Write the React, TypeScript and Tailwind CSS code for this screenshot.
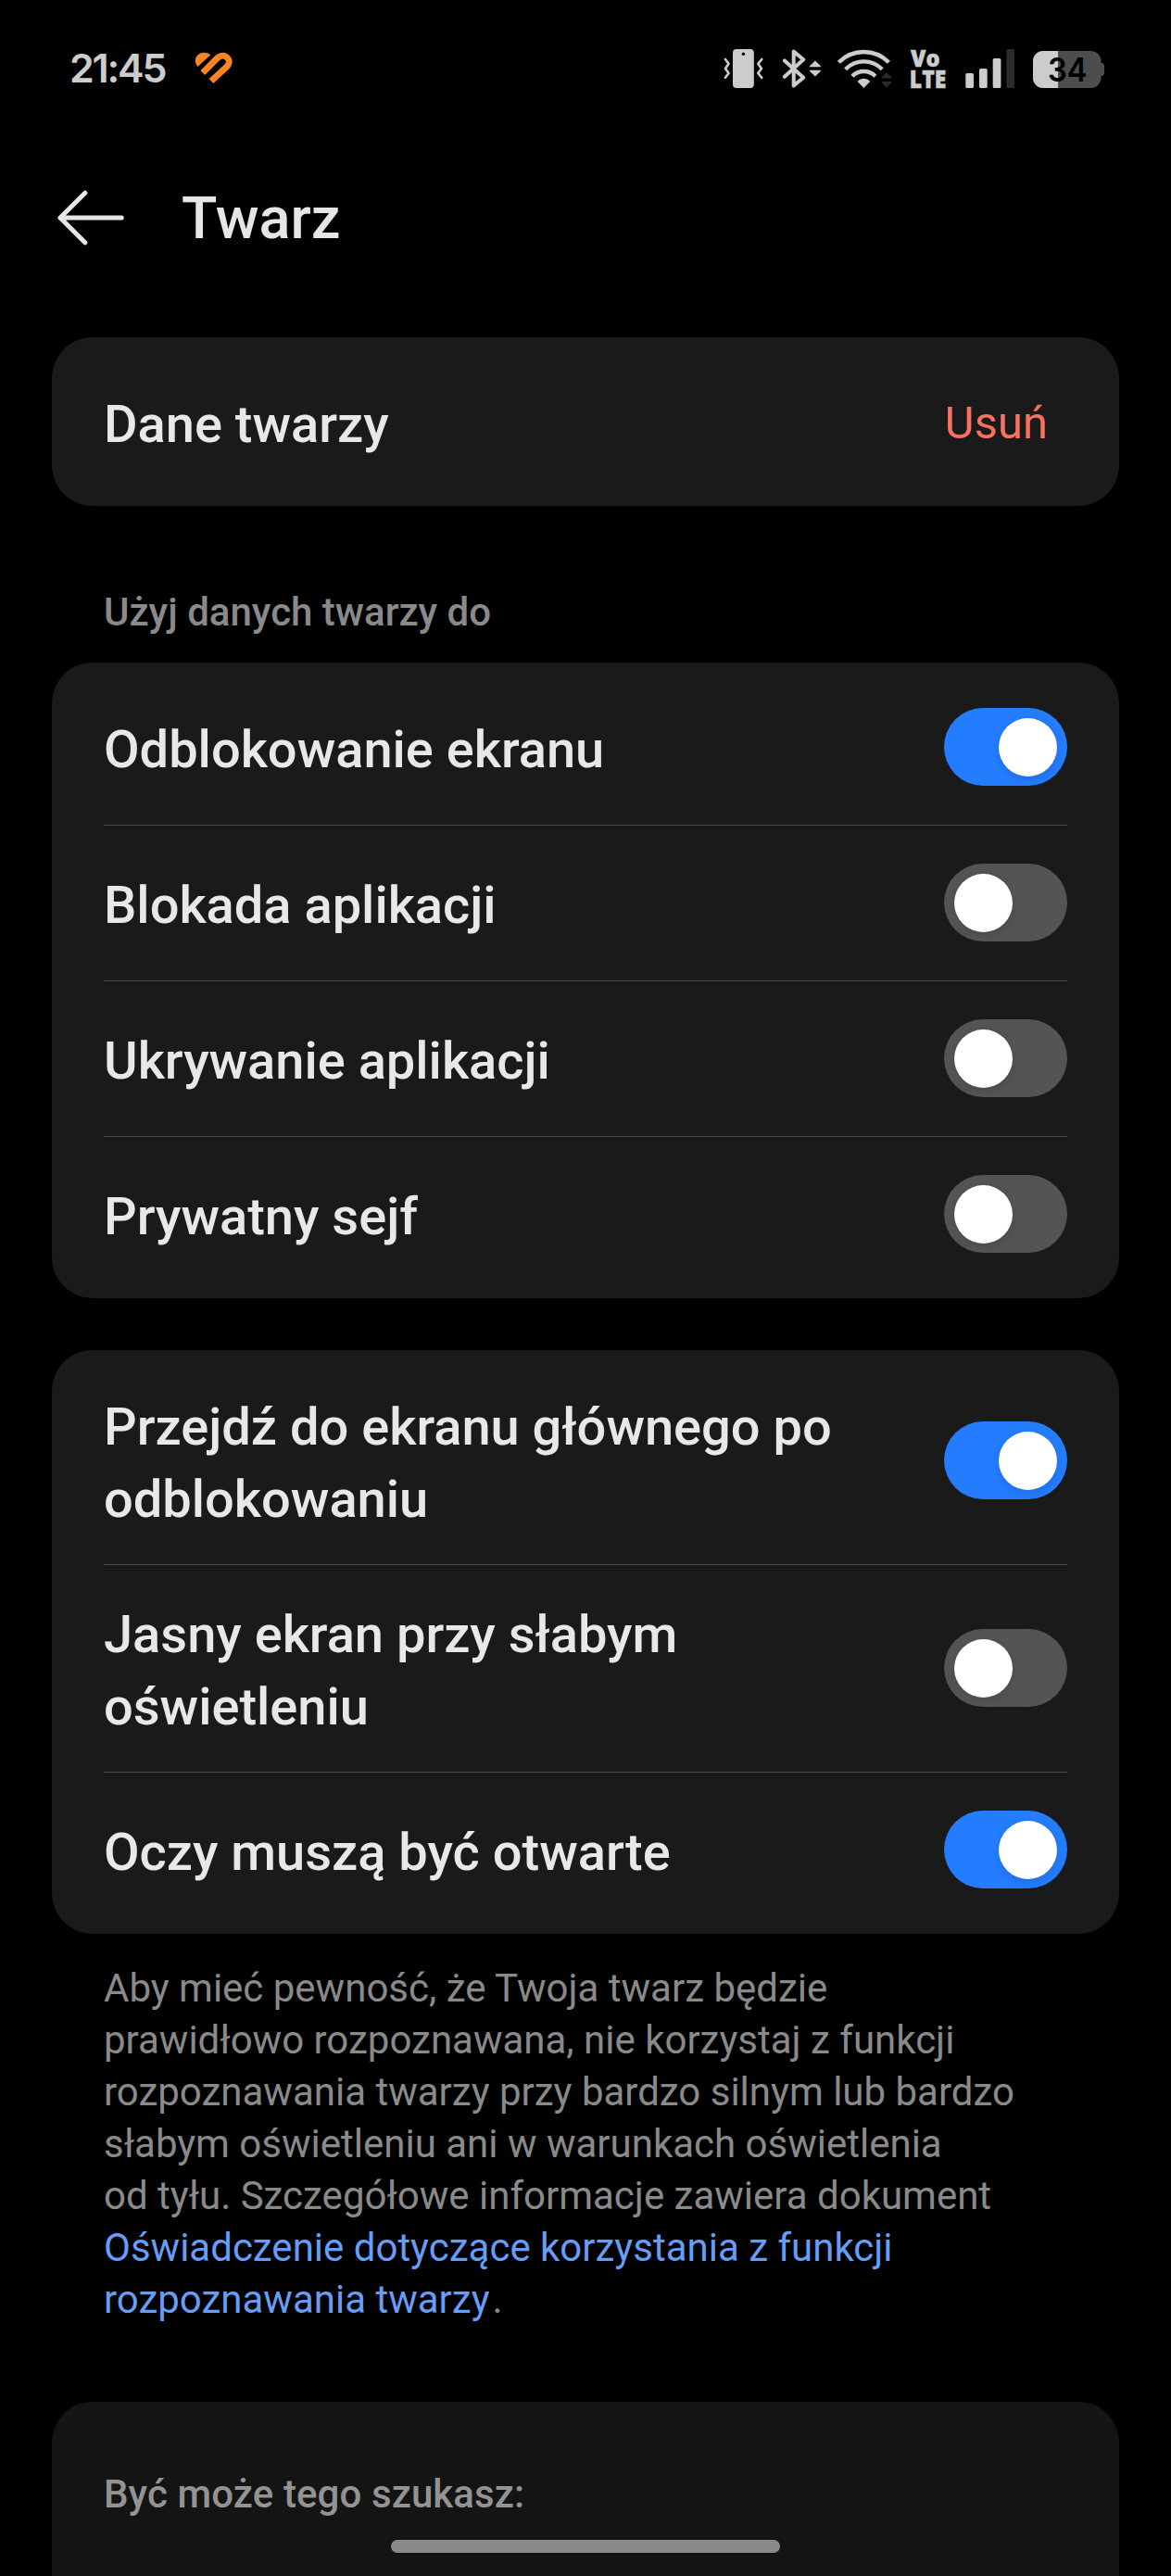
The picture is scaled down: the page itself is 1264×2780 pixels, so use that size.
import { useState } from "react";

type Option = {
    id: string;
    lines: string[];
    enabled: boolean;
};

const usageOptions: Option[] = [
    { id: "unlock", lines: ["Odblokowanie ekranu"], enabled: true },
    { id: "app-lock", lines: ["Blokada aplikacji"], enabled: false },
    { id: "app-hide", lines: ["Ukrywanie aplikacji"], enabled: false },
    { id: "safe", lines: ["Prywatny sejf"], enabled: false },
];

const unlockOptions: Option[] = [
    { id: "home", lines: ["Przejdź do ekranu głównego po", "odblokowaniu"], enabled: true },
    { id: "bright", lines: ["Jasny ekran przy słabym", "oświetleniu"], enabled: false },
    { id: "eyes", lines: ["Oczy muszą być otwarte"], enabled: true },
];

function HeartIcon() {
    return (
        <svg width="42" height="36" viewBox="0 0 42 36" fill="none">
            <path d="M3.4 15.9 C-0.6 11 0.3 5 4.6 2.4 C8.6 0 13.6 0.5 17.3 3.2 Z" fill="#fd8420" />
            <path d="M8.8 22.6 L24.2 7 C27 4.2 31.2 3.1 34.4 5.4 C38.2 8.2 38 12.6 35 15.7 L17.9 31.6" stroke="#fd8420" strokeWidth="6.8" />
        </svg>
    );
}

function VibrateIcon() {
    return (
        <svg width="44" height="42" viewBox="0 0 44 42" fill="none">
            <rect x="10" y="0" width="22.8" height="42" rx="4" fill="#cccccc" />
            <circle cx="21.4" cy="5.2" r="1.7" fill="#000" />
            <g stroke="#cccccc" strokeWidth="2.6" strokeLinecap="round" strokeLinejoin="round">
                <path d="M1.9 11 L5.6 15.8 L2 21 L5.6 26 L1.9 30.8" />
                <path d="M41.3 11 L37.2 15.8 L41 21 L37.2 26 L41.3 30.8" />
            </g>
        </svg>
    );
}

function BluetoothIcon() {
    return (
        <svg width="43" height="42" viewBox="0 0 43 42" fill="none">
            <path d="M2.9 12.4 L23.2 30.8 L12.7 39.4 V2.6 L23.2 11.2 L2.9 29.8" stroke="#cccccc" strokeWidth="4" strokeLinecap="round" strokeLinejoin="round" />
            <path d="M35.9 12.6 L41.9 18.2 V19.2 H29.9 V18.2 Z M35.9 29.4 L41.9 23.8 V22.8 H29.9 V23.8 Z" fill="#cccccc" />
        </svg>
    );
}

function WifiIcon() {
    return (
        <svg width="60" height="42" viewBox="0 0 60 42" fill="none">
            <g stroke="#cccccc" strokeWidth="4.4">
                <path d="M2.4 14.3 A38 38 0 0 1 56.4 14.3" />
                <path d="M9.6 21.8 A27.5 27.5 0 0 1 49.2 21.8" />
                <path d="M16.9 29.2 A17.5 17.5 0 0 1 41.9 29.2" />
            </g>
            <path d="M22.6 35 C26.4 30.6 32.4 30.6 36.2 35 L29.4 42 Z" fill="#cccccc" />
            <path d="M54 25.2 L59.4 30.6 V31.6 H48.6 V30.6 Z M54 41.4 L59.4 36 V35 H48.6 V36 Z" fill="#2b2b2b" />
        </svg>
    );
}

function VolteIcon() {
    return (
        <svg width="37" height="42" viewBox="0 0 37 42" fill="#cccccc" stroke="#cccccc" strokeWidth="0.5" className="overflow-visible font-['Open_Sans',sans-serif] font-extrabold">
            <text x="0" y="18.6" fontSize="25" textLength="31.5" lengthAdjust="spacingAndGlyphs">Vo</text>
            <text x="-1.2" y="42" fontSize="26" textLength="39.5" lengthAdjust="spacingAndGlyphs">LTE</text>
        </svg>
    );
}

function SignalIcon() {
    return (
        <svg width="54" height="42" viewBox="0 0 54 42" fill="#cccccc">
            <rect x="0.3" y="26" width="8.7" height="16" rx="1.6" />
            <rect x="15" y="21" width="8.7" height="21" rx="1.6" />
            <rect x="29.7" y="10" width="8.7" height="32" rx="1.6" />
            <rect x="44.4" y="0" width="8.7" height="42" rx="1.6" fill="#2b2b2b" />
        </svg>
    );
}

function BatteryIcon() {
    return (
        <svg width="77" height="42" viewBox="0 0 77 42" className="overflow-visible">
            <path d="M72 15 H74 Q77 15 77 19 V25 Q77 29 74 29 H72 Z" fill="#4d4d4d" />
            <rect x="0" y="2" width="73.5" height="40" rx="11" fill="#4d4d4d" />
            <path d="M11 2 H27 V42 H11 A11 11 0 0 1 0 31 V13 A11 11 0 0 1 11 2 Z" fill="#cccccc" />
            <text x="16" y="35.4" fontSize="36" textLength="42.5" lengthAdjust="spacingAndGlyphs" className="font-[Inter,sans-serif] font-semibold">34</text>
        </svg>
    );
}

function Toggle({ on, onClick, label }: { on: boolean; onClick: () => void; label: string }) {
    return (
        <button
            type="button"
            role="switch"
            aria-checked={on}
            aria-label={label}
            onClick={onClick}
            className={`flex h-[84px] w-[133px] shrink-0 items-center rounded-full px-[11px] ${on ? "justify-end bg-[#247cff]" : "justify-start bg-[#545454]"}`}
        >
            <span className="size-[63px] rounded-full bg-white shadow-[0_3px_8px_rgba(0,0,0,0.12)]" />
        </button>
    );
}

function OptionCard({ options }: { options: Option[] }) {
    const [state, setState] = useState(options.map((option) => option.enabled));

    const toggle = (index: number) => {
        setState(state.map((value, i) => (i === index ? !value : value)));
    };

    return (
        <div className="rounded-[44px] bg-[#1a1a1a] px-14 py-[7px]">
            {options.map((option, index) => (
                <div
                    key={option.id}
                    className={`relative flex items-center justify-between ${option.lines.length > 1 ? "h-[224px]" : "h-[168px]"}`}
                >
                    <div className="pt-[6px] text-[56px] leading-[78px] font-medium whitespace-nowrap text-[#e8e8e8]">
                        {option.lines.map((line) => (
                            <p key={line}>{line}</p>
                        ))}
                    </div>
                    <Toggle on={state[index]} onClick={() => toggle(index)} label={option.lines.join(" ")} />
                    {index > 0 && <div className="absolute inset-x-0 top-0 h-px bg-[#484848]" />}
                </div>
            ))}
        </div>
    );
}

export default function App() {
    return (
        <div className="relative h-[2780px] w-[1264px] overflow-hidden bg-black font-[Roboto,sans-serif]">
            <div className="flex h-[148px] items-center justify-between pr-[72px] pl-[75px]">
                <div className="flex items-center">
                    <span className="w-[135px] pb-[3px] font-[Inter,sans-serif] text-[43px] leading-[52px] font-semibold tracking-[-2.2px] text-[#cccccc]">21:45</span>
                    <HeartIcon />
                </div>
                <div className="flex items-center">
                    <VibrateIcon />
                    <div className="ml-[19px]"><BluetoothIcon /></div>
                    <div className="ml-4"><WifiIcon /></div>
                    <div className="ml-5"><VolteIcon /></div>
                    <div className="ml-[22px]"><SignalIcon /></div>
                    <div className="ml-[19px]"><BatteryIcon /></div>
                </div>
            </div>

            <header className="flex h-[174px] items-center pl-[60px]">
                <svg width="76" height="62" viewBox="0 0 76 62" fill="none" stroke="#e6e6e6" strokeWidth="5" strokeLinecap="round" strokeLinejoin="round">
                    <path d="M71.2 31 H5 M31.8 4.2 L5 31 L31.8 57.8" />
                </svg>
                <h1 className="ml-[60px] pt-px text-[63px] leading-[74px] font-medium text-[#e6e6e6]">Twarz</h1>
            </header>

            <main className="px-14 pt-[42px]">
                <div className="flex h-[182px] items-center justify-between rounded-[44px] bg-[#1a1a1a] pr-[77px] pl-14">
                    <span className="pt-[6px] text-[56px] leading-[78px] font-medium text-[#e8e8e8]">Dane twarzy</span>
                    <button type="button" className="pt-[4px] text-[49px] leading-[58px] text-[#f87060]">Usuń</button>
                </div>

                <h2 className="mt-[87px] mb-[26px] px-14 text-[42px] leading-[56px] font-medium text-[#8a8a8a]">Użyj danych twarzy do</h2>
                <OptionCard options={usageOptions} />

                <div className="mt-14">
                    <OptionCard options={unlockOptions} />
                </div>

                <p className="mt-[31px] px-14 text-[42px] leading-[56px] whitespace-nowrap text-[#8a8a8a]">
                    Aby mieć pewność, że Twoja twarz będzie<br />
                    prawidłowo rozpoznawana, nie korzystaj z funkcji<br />
                    rozpoznawania twarzy przy bardzo silnym lub bardzo<br />
                    słabym oświetleniu ani w warunkach oświetlenia<br />
                    od tyłu. Szczegółowe informacje zawiera dokument<br />
                    <a href="#" className="mr-[3px] text-[#669df6]">
                        Oświadczenie dotyczące korzystania z funkcji<br />
                        rozpoznawania twarzy
                    </a>.
                </p>

                <div className="mt-[82px] h-[300px] rounded-[44px] bg-[#141414] px-14 pt-[72px]">
                    <h2 className="text-[42px] leading-[56px] font-medium tracking-[0.1px] text-[#939393]">Być może tego szukasz:</h2>
                </div>
            </main>

            <div className="absolute top-[2741px] left-[422px] h-[14px] w-[420px] rounded-full bg-[#8a8a8a]" />
        </div>
    );
}
